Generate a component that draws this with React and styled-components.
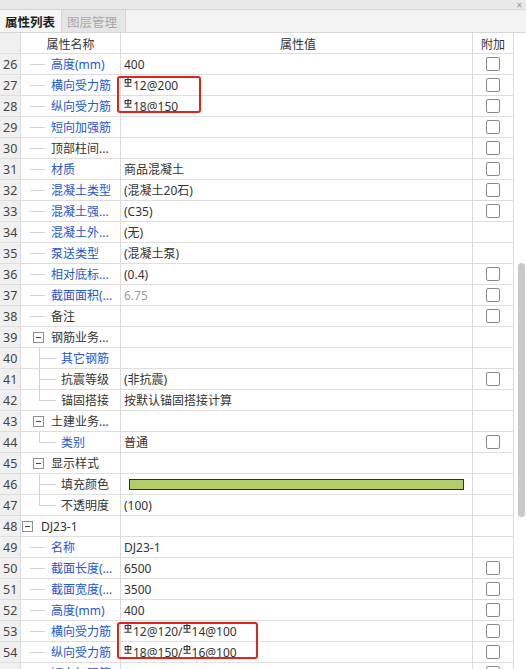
import React from "react";
import styled, { createGlobalStyle } from "styled-components";

const Global = createGlobalStyle`
  html, body {
    margin: 0;
    padding: 0;
    background: #fff;
    overflow: hidden;
  }
  body {
    font-family: "Noto Sans", "Noto Sans CJK SC", sans-serif;
    font-size: 12px;
    color: #333;
  }
`;

const Panel = styled.div`
  width: 526px;
  height: 669px;
  display: flex;
  flex-direction: column;
  overflow: hidden;
`;

const TitleBar = styled.div`
  height: 9px;
  border-bottom: 1px solid #d6d6d6;
  background: #e9e9e9;
  display: flex;
  justify-content: flex-end;
  align-items: center;
  padding-right: 3px;
  color: #9a9a9a;
  font-size: 8px;
  line-height: 9px;
`;

const TabBar = styled.div`
  height: 22px;
  border-bottom: 1px solid #d6d6d6;
  background: #f3f3f3;
  display: flex;
`;

const Tab = styled.div`
  padding: 0 5px;
  display: flex;
  align-items: center;
  font-family: "Noto Sans CJK SC", sans-serif;
  font-size: 12.5px;
  font-weight: ${p => (p.$active ? 700 : 400)};
  color: ${p => (p.$active ? "#222" : "#a8a8a8")};
  background: ${p => (p.$active ? "#f6f6f6" : "#e6e6e6")};
  border-right: 1px solid #d6d6d6;
  width: ${p => p.$w}px;
  box-sizing: border-box;
`;

const Body = styled.div`
  flex: 1;
  display: flex;
  min-height: 0;
`;

const Grid = styled.div`
  width: 514px;
  display: flex;
  flex-direction: column;
`;

const Row = styled.div`
  display: flex;
  height: 20px;
  border-bottom: 1px solid #dedede;
  flex-shrink: 0;
`;

const Cell = styled.div`
  position: relative;
  box-sizing: border-box;
  height: 20px;
  border-right: 1px solid #dcdcdc;
  display: flex;
  align-items: center;
  white-space: nowrap;
  flex-shrink: 0;
`;

const NumCell = styled(Cell)`
  width: 21px;
  background: #f0f0f0;
  color: #444;
  padding-left: 3px;
  font-size: 12.5px;
`;

const NameCell = styled(Cell)`
  width: 100px;
  overflow: hidden;
  justify-content: ${p => (p.$head ? "center" : "flex-start")};
`;

const ValueCell = styled(Cell)`
  width: 352px;
  padding-left: 3px;
  justify-content: ${p => (p.$head ? "center" : "flex-start")};
  color: ${p => (p.$muted ? "#999" : "#333")};
  overflow: visible;
`;

const ExtraCell = styled(Cell)`
  width: 41px;
  justify-content: center;
`;

const HeadText = styled.span`
  font-family: "Noto Sans CJK SC", sans-serif;
  color: #333;
`;

const Label = styled.span`
  color: ${p => (p.$blue ? "#2356d2" : "#333")};
  font-family: "Noto Sans", "Noto Sans CJK SC", sans-serif;
`;

const Guide = styled.div`
  position: relative;
  flex-shrink: 0;
  align-self: stretch;
  width: ${p => p.$w}px;
  margin-left: ${p => p.$offset}px;
  margin-right: ${p => p.$gap}px;

  &::after {
    content: "";
    position: absolute;
    left: 0;
    right: 0;
    top: 10px;
    border-top: 1px solid #d2d2d2;
  }

  ${p =>
    p.$vert &&
    `
    &::before {
      content: "";
      position: absolute;
      left: 0;
      top: -1px;
      height: ${p.$last ? 12 : 21}px;
      border-left: 1px solid #d2d2d2;
    }
  `}
`;

const ExpandBox = styled.div`
  flex-shrink: 0;
  width: 11px;
  height: 11px;
  box-sizing: border-box;
  border: 1px solid #8f8f8f;
  background: #fff;
  margin-left: ${p => p.$offset}px;
  margin-right: ${p => p.$gap}px;
  display: flex;
  align-items: center;
  justify-content: center;

  &::before {
    content: "";
    width: 5px;
    border-top: 1px solid #444;
  }
`;

const Check = styled.div`
  width: 14px;
  height: 14px;
  box-sizing: border-box;
  border: 1px solid #8a8a8a;
  border-radius: 2px;
  background: #fff;
`;

const ColorBar = styled.div`
  width: 333px;
  height: 9px;
  margin-left: 5px;
  background: #b3cc6a;
  border: 1px solid #2e3320;
`;

const Highlight = styled.div`
  position: absolute;
  left: -4px;
  top: 1px;
  width: ${p => p.$w}px;
  height: 37px;
  box-sizing: border-box;
  border: 2px solid #e3221c;
  border-radius: 3px;
  pointer-events: none;
  z-index: 2;
`;

const ScrollTrack = styled.div`
  flex: 1;
  display: flex;
  justify-content: flex-end;
  padding-right: 1px;
`;

const Thumb = styled.div`
  width: 7px;
  height: 254px;
  margin-top: 230px;
  border-radius: 4px;
  background: #c9c9c9;
`;

const Rebar = () => (
  <svg width="8" height="9" viewBox="0 0 8 9" style={{ verticalAlign: "3px", marginRight: 1 }}>
    <path d="M1.2 1.5h5.6v3.2h-5.6z" fill="none" stroke="#333" strokeWidth="1.1" />
    <path d="M4 0v8.3M0.4 8.3h7.2" fill="none" stroke="#333" strokeWidth="1.1" />
  </svg>
);

const RebarText = ({ text }) => {
  const parts = text.split("%");
  return (
    <span>
      {parts.map((p, i) => (
        <React.Fragment key={i}>
          {i > 0 && <Rebar />}
          {p}
        </React.Fragment>
      ))}
    </span>
  );
};

// t: leaf1 | leaf2 | group1 | group0
const rows = [
  { n: 26, t: "leaf1", label: "高度(mm)", blue: true, value: "400", check: true },
  { n: 27, t: "leaf1", label: "横向受力筋", blue: true, value: "%12@200", check: true, mark: 84 },
  { n: 28, t: "leaf1", label: "纵向受力筋", blue: true, value: "%18@150", check: true },
  { n: 29, t: "leaf1", label: "短向加强筋", blue: true, value: "", check: true },
  { n: 30, t: "leaf1", label: "顶部柱间...", value: "", check: true },
  { n: 31, t: "leaf1", label: "材质", blue: true, value: "商品混凝土", check: true },
  { n: 32, t: "leaf1", label: "混凝土类型", blue: true, value: "(混凝土20石)", check: true },
  { n: 33, t: "leaf1", label: "混凝土强...", blue: true, value: "(C35)", check: true },
  { n: 34, t: "leaf1", label: "混凝土外...", blue: true, value: "(无)" },
  { n: 35, t: "leaf1", label: "泵送类型", blue: true, value: "(混凝土泵)" },
  { n: 36, t: "leaf1", label: "相对底标...", blue: true, value: "(0.4)", check: true },
  { n: 37, t: "leaf1", label: "截面面积(...", blue: true, value: "6.75", muted: true, check: true },
  { n: 38, t: "leaf1", label: "备注", value: "", check: true },
  { n: 39, t: "group1", label: "钢筋业务..." },
  { n: 40, t: "leaf2", label: "其它钢筋", blue: true },
  { n: 41, t: "leaf2", label: "抗震等级", value: "(非抗震)", check: true },
  { n: 42, t: "leaf2", label: "锚固搭接", value: "按默认锚固搭接计算", last: true },
  { n: 43, t: "group1", label: "土建业务..." },
  { n: 44, t: "leaf2", label: "类别", blue: true, value: "普通", check: true, last: true },
  { n: 45, t: "group1", label: "显示样式" },
  { n: 46, t: "leaf2", label: "填充颜色", color: true },
  { n: 47, t: "leaf2", label: "不透明度", value: "(100)", last: true },
  { n: 48, t: "group0", label: "DJ23-1" },
  { n: 49, t: "leaf1", label: "名称", blue: true, value: "DJ23-1" },
  { n: 50, t: "leaf1", label: "截面长度(...", blue: true, value: "6500", check: true },
  { n: 51, t: "leaf1", label: "截面宽度(...", blue: true, value: "3500", check: true },
  { n: 52, t: "leaf1", label: "高度(mm)", blue: true, value: "400", check: true },
  { n: 53, t: "leaf1", label: "横向受力筋", blue: true, value: "%12@120/%14@100", check: true, mark: 141 },
  { n: 54, t: "leaf1", label: "纵向受力筋", blue: true, value: "%18@150/%16@100", check: true },
  { n: 55, t: "leaf1", label: "短向加强筋", blue: true, value: "", check: true },
];

const TreeMark = ({ r }) => {
  if (r.t === "group0") return <ExpandBox $offset={1} $gap={8} />;
  if (r.t === "group1") return <ExpandBox $offset={12} $gap={7} />;
  if (r.t === "leaf2") return <Guide $offset={18} $w={17} $gap={5} $vert $last={r.last} />;
  return <Guide $offset={9} $w={15} $gap={6} />;
};

export default function App() {
  return (
    <Panel>
      <Global />
      <TitleBar>✕</TitleBar>
      <TabBar>
        <Tab $active $w={62}>属性列表</Tab>
        <Tab $w={64}>图层管理</Tab>
      </TabBar>
      <Body>
        <Grid>
          <Row>
            <NumCell />
            <NameCell $head>
              <HeadText>属性名称</HeadText>
            </NameCell>
            <ValueCell $head>
              <HeadText>属性值</HeadText>
            </ValueCell>
            <ExtraCell>
              <HeadText>附加</HeadText>
            </ExtraCell>
          </Row>
          {rows.map(r => (
            <Row key={r.n}>
              <NumCell>{r.n}</NumCell>
              <NameCell>
                <TreeMark r={r} />
                <Label $blue={r.blue}>{r.label}</Label>
              </NameCell>
              <ValueCell $muted={r.muted}>
                {r.color ? <ColorBar /> : r.value ? <RebarText text={r.value} /> : null}
                {r.mark && <Highlight $w={r.mark} />}
              </ValueCell>
              <ExtraCell>{r.check && <Check />}</ExtraCell>
            </Row>
          ))}
        </Grid>
        <ScrollTrack>
          <Thumb />
        </ScrollTrack>
      </Body>
    </Panel>
  );
}
